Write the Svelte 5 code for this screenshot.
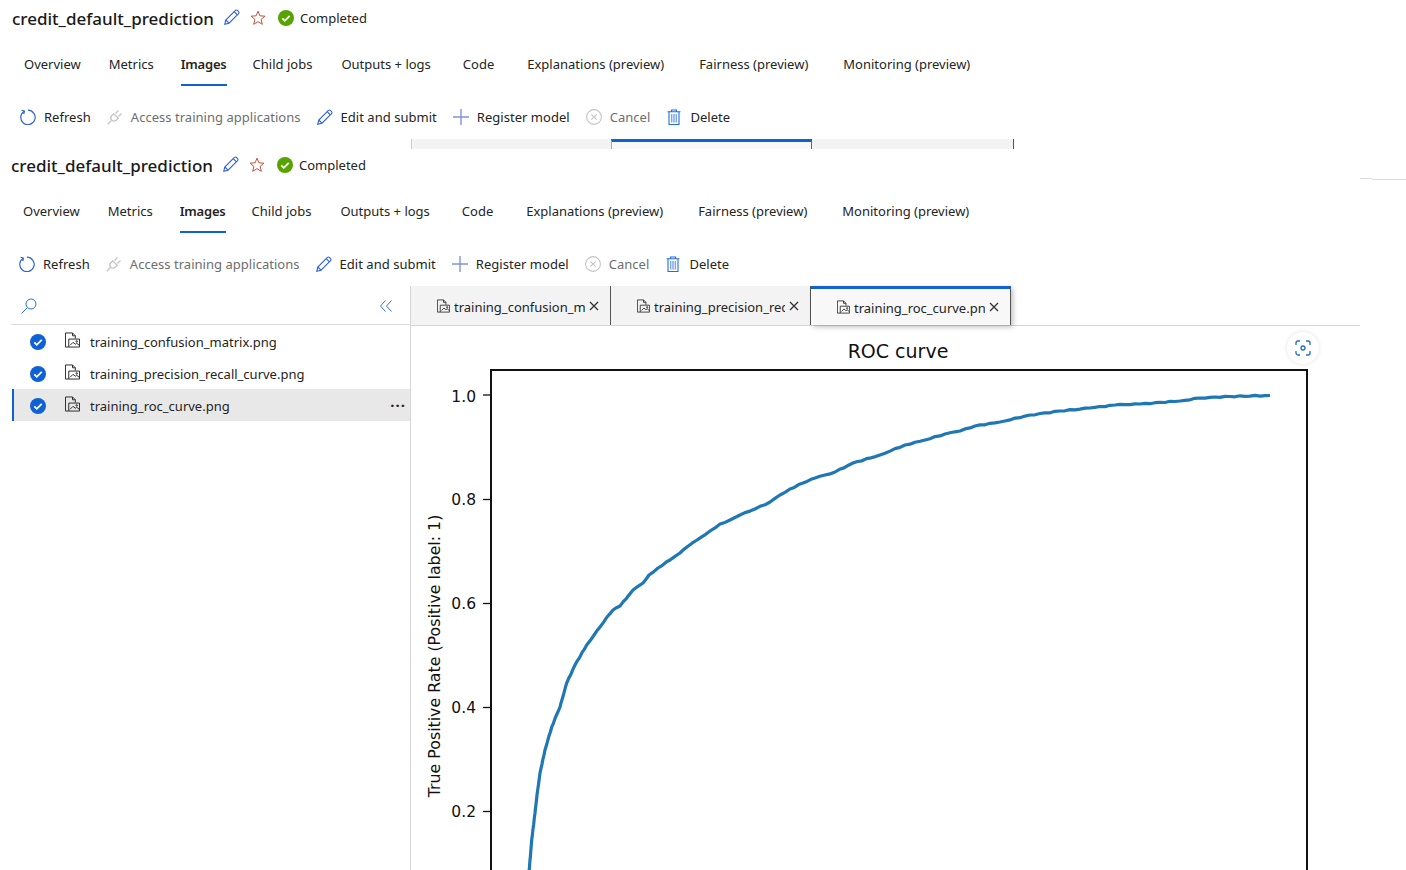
<script lang="ts">
  // Job detail page, captured twice on top of each other, with the image viewer below.
  const navTabs = [
    { label: 'Overview', gap: 28 },
    { label: 'Metrics', gap: 27 },
    { label: 'Images', gap: 26 },
    { label: 'Child jobs', gap: 29 },
    { label: 'Outputs + logs', gap: 32 },
    { label: 'Code', gap: 33 },
    { label: 'Explanations (preview)', gap: 35 },
    { label: 'Fairness (preview)', gap: 35 },
    { label: 'Monitoring (preview)', gap: 0 }
  ].map((t) => ({ ...t, active: t.label === 'Images' }))
  const files = [
    { name: 'training_confusion_matrix.png' },
    { name: 'training_precision_recall_curve.png' },
    { name: 'training_roc_curve.png', selected: true }
  ]
  const openTabs = [
    { name: 'training_confusion_matrix.png' },
    { name: 'training_precision_recall_curve.png' },
    { name: 'training_roc_curve.png', active: true }
  ]
  const ticks = [
    { label: '1.0', y: 395, ty: 401.5 },
    { label: '0.8', y: 499.5, ty: 505 },
    { label: '0.6', y: 603.5, ty: 609 },
    { label: '0.4', y: 707.5, ty: 713 },
    { label: '0.2', y: 811.5, ty: 817 }
  ]
  // page coordinates of the ROC line
  const curve = [
    [529, 872], [531.7, 840], [535, 813], [537, 795], [540, 773], [545, 750], [551.7, 727], [557, 714],
    [560, 707], [566.7, 683], [575, 665], [586.7, 645], [600, 627], [607, 617], [613, 610], [620, 606],
    [633, 590], [643, 583], [649, 575], [658, 568], [670, 560], [680, 553], [687, 547], [697, 540],
    [710, 531], [720, 524], [730, 520], [740, 515], [755, 509], [770, 502], [780, 495], [790, 489],
    [803, 483], [815, 478], [835, 472], [853, 463], [880, 455], [905, 445], [925, 440], [945, 434],
    [960, 431], [975, 426], [1000, 422], [1030, 415], [1060, 411], [1090, 408], [1115, 405], [1140, 404],
    [1180, 401], [1200, 398], [1230, 396.5], [1270, 395.5]
  ]
  // split each segment and wobble it a little, the real line is made of small steps
  const detailed: number[][] = []
  curve.forEach((p, i) => {
    const next = curve[i + 1]
    if (!next) return detailed.push(p)
    const n = Math.max(1, Math.round(Math.hypot(next[0] - p[0], next[1] - p[1]) / 5))
    for (let k = 0; k < n; k++) {
      const t = k / n
      const wob = k === 0 ? 0 : Math.sin(k * 2.3 + i) * 0.45
      detailed.push([p[0] + (next[0] - p[0]) * t, p[1] + (next[1] - p[1]) * t + wob])
    }
  })
  const curvePts = detailed.map((p) => p[0].toFixed(1) + ',' + p[1].toFixed(1)).join(' ')
</script>

{#snippet pencil()}
  <svg class="ico" viewBox="0 0 16 16" fill="none" stroke="#2f62d8" stroke-width="1.100">
    <path d="M.8 15.200l1-4.200L11.400 1.400a1.400 1.400 0 0 1 2 0l1.200 1.200a1.400 1.400 0 0 1 0 2L5 14.200z" />
    <path d="M10.200 2.600l3.200 3.200M1.800 11l3.200 3.200" />
  </svg>
{/snippet}

{#snippet fileIcon(cls)}
  <svg class={cls} viewBox="0 0 16 16" fill="none" stroke="#222" stroke-width="1">
    <path d="M.5 15.500V.5h7.500l3 3v3M8 .5v3h3" />
    <path d="M.5 15.500h15v-8.500H4v8.500" />
    <path d="M5.500 13.500l3-3 2.500 2 1.500-1 2.500 2" />
    <circle cx="12.500" cy="9.500" r=".8" />
  </svg>
{/snippet}

{#snippet header()}
  <div class="title-row">
    <h1>credit_default_prediction</h1>
    <span class="title-pencil">{@render pencil()}</span>
    <svg class="star" viewBox="0 0 16 16" fill="none" stroke="#c8503c" stroke-width="1">
      <path d="M8 1.200l1.900 4.600 5 .4-3.800 3.200 1.200 4.900L8 11.700l-4.300 2.600 1.200-4.900L1.100 6.200l5-.4z" />
    </svg>
    <svg class="status-ico" viewBox="0 0 16 16">
      <circle cx="8" cy="8" r="8" fill="#57a300" />
      <path d="M4.300 8.300l2.500 2.500 4.900-5" fill="none" stroke="#fff" stroke-width="1.800" />
    </svg>
    <span class="status">Completed</span>
  </div>

  <nav class="nav">
    {#each navTabs as t (t.label)}
      <span class="nav-tab" class:active={t.active} style="margin-right:{t.gap}px">{t.label}</span>
    {/each}
  </nav>

  <div class="toolbar">
    <span class="tool">
      <svg class="ico" viewBox="0 0 16 16" fill="none" stroke="#2f62d8" stroke-width="1.200">
        <path d="M4.300 2.200a7.200 7.200 0 1 0 3.700-1" />
        <path d="M1.600 1.200l2.900 1 -.8 3" />
      </svg>
      Refresh
    </span>
    <span class="tool off">
      <svg class="ico" viewBox="0 0 16 16" fill="none" stroke="#c4c4c4" stroke-width="1.300">
        <path d="M.8 15.200l3.400-3.400M4.800 6.800l2-2 4.400 4.400-2 2a3 3 0 0 1-4.400-4.400zM8.500 4.500L11.500 1.500M11.500 7.500l3-3" />
      </svg>
      Access training applications
    </span>
    <span class="tool">{@render pencil()} Edit and submit</span>
    <span class="tool">
      <svg class="ico" viewBox="0 0 16 16" fill="none" stroke="#7f92e4" stroke-width="1.400">
        <path d="M8 0v16M0 8h16" />
      </svg>
      Register model
    </span>
    <span class="tool off">
      <svg class="ico" viewBox="0 0 16 16" fill="none" stroke="#c4c4c4" stroke-width="1.100">
        <circle cx="8" cy="8" r="7.400" />
        <path d="M5.300 5.300l5.400 5.400M10.700 5.300l-5.400 5.400" />
      </svg>
      Cancel
    </span>
    <span class="tool">
      <svg class="ico" viewBox="0 0 16 16" fill="none" stroke="#1f6fe0" stroke-width="1.100">
        <path d="M1.500 2.800h13M5.500 2.800V1h5v1.800M3 2.800v12.700h10V2.800" />
        <path d="M5.500 5v8.500M7.200 5v8.500M8.800 5v8.500M10.500 5v8.500" stroke="#7fa8ea" />
      </svg>
      Delete
    </span>
  </div>
{/snippet}

<div class="page">
  <section class="head first">{@render header()}</section>

  <div class="strip">
    <span class="strip-tab"></span>
    <span class="strip-tab on"></span>
    <span class="strip-tab last"></span>
  </div>

  <section class="head">{@render header()}</section>

  <div class="viewer">
    <aside class="side">
      <div class="side-top">
        <svg class="search" viewBox="0 0 16 16" fill="none" stroke="#2f6fd8" stroke-width="1">
          <circle cx="10" cy="6" r="5" />
          <path d="M6.400 9.600L.6 15.400" />
        </svg>
        <svg class="collapse" viewBox="0 0 12 12" fill="none" stroke="#3f6fd6" stroke-width="1">
          <path d="M5.500.5L.5 6l5 5.500M11.500.5L6.500 6l5 5.500" />
        </svg>
      </div>
      {#each files as f (f.name)}
        <div class="file" class:selected={f.selected}>
          <svg class="check" viewBox="0 0 16 16">
            <circle cx="8" cy="8" r="8" fill="#0f62d6" />
            <path d="M4.300 8.300l2.500 2.500 4.900-5" fill="none" stroke="#fff" stroke-width="1.800" />
          </svg>
          {@render fileIcon('file-ico')}
          <span class="file-name">{f.name}</span>
          {#if f.selected}<span class="more">···</span>{/if}
        </div>
      {/each}
    </aside>

    <main class="main">
      <div class="tabs">
        {#each openTabs as t (t.name)}
          <div class="tab" class:active={t.active}>
            {@render fileIcon('tab-ico')}
            <span class="tab-name">{t.name}</span>
            <svg class="tab-x" viewBox="0 0 10 10" fill="none" stroke="#333" stroke-width="1.300">
              <path d="M1 1l8 8M9 1l-8 8" />
            </svg>
          </div>
        {/each}
      </div>

      <div class="plot">
        <!-- viewBox uses page coordinates so the figure reads straight off the screenshot -->
        <svg class="figure" viewBox="411 326 949 544">
          <text x="898" y="358" text-anchor="middle" class="plot-title">ROC curve</text>
          <rect x="491" y="370" width="816" height="520" fill="none" stroke="#111" stroke-width="2" />
          {#each ticks as t (t.label)}
            <line x1="483" x2="491" y1={t.y} y2={t.y} stroke="#111" stroke-width="1.300" />
            <text x="476" y={t.ty} text-anchor="end" class="tick">{t.label}</text>
          {/each}
          <text transform="translate(440 656) rotate(-90)" text-anchor="middle" class="ylabel">
            True Positive Rate (Positive label: 1)
          </text>
          <polyline points={curvePts} fill="none" stroke="#1f77b4" stroke-width="3.200" stroke-linejoin="round" />
        </svg>
        <button class="shot" aria-label="Capture">
          <svg viewBox="0 0 16 16" fill="none" stroke="#1f6fc8" stroke-width="1.300">
            <path d="M1 5V3a2 2 0 0 1 2-2h2M11 1h2a2 2 0 0 1 2 2v2M15 11v2a2 2 0 0 1-2 2h-2M5 15H3a2 2 0 0 1-2-2v-2" />
            <circle cx="8" cy="8" r="2" />
          </svg>
        </button>
      </div>
    </main>
  </div>

  <div class="edge"><i></i><b></b></div>
</div>

<style>
  :global(body) {
    margin: 0;
    background: #fff;
  }
  .page {
    position: relative;
    height: 870px;
    overflow: hidden;
    padding-left: 11px;
    font-family: 'Noto Sans', 'Open Sans', sans-serif;
    font-size: 13px;
    color: #242424;
  }
  .head {
    height: 139px;
  }
  .head.first {
    margin-left: 1px;
  }
  .title-row {
    display: flex;
    align-items: center;
    height: 38px;
  }
  h1 {
    margin: 0 0 2px;
    font-size: 17px;
    font-weight: 500;
    color: #1a1a1a;
    width: 202px;
    white-space: nowrap;
  }
  .title-pencil {
    display: flex;
    margin: 0 0 4px 10px;
  }
  .star {
    width: 16px;
    height: 16px;
    margin: 0 0 2px 10px;
  }
  .status-ico {
    width: 16px;
    height: 16px;
    margin: 0 0 2px 12px;
  }
  .status {
    margin: 0 0 2px 6px;
  }
  .nav {
    display: flex;
    height: 48px;
    padding-left: 12px;
  }
  .nav-tab {
    height: 48px;
    line-height: 52px;
    white-space: nowrap;
    box-sizing: border-box;
  }
  .nav-tab.active {
    font-weight: 600;
    letter-spacing: -0.2px;
    border-bottom: 2px solid #0f62d6;
  }
  .toolbar {
    display: flex;
    align-items: center;
    gap: 16px;
    height: 32px;
    margin: 15px 0 0 8px;
  }
  .tool {
    display: inline-flex;
    align-items: center;
    gap: 8px;
    white-space: nowrap;
    letter-spacing: 0.03px;
  }
  .tool.off {
    color: #6e6e6e;
  }
  .ico {
    width: 16px;
    height: 16px;
    flex: none;
  }
  .strip {
    display: flex;
    height: 10px;
    margin: 0 0 -2px 400px;
  }
  .strip-tab {
    width: 200px;
    box-sizing: border-box;
    background: #f3f3f3;
    border-left: 1px solid #d0d0d0;
  }
  .strip-tab.on {
    border-top: 3px solid #0f62d6;
    border-left: 1px solid #aaa;
    border-right: 1px solid #666;
    width: 201px;
    background: #f8f8f8;
  }
  .strip-tab.last {
    width: 202px;
    border-left: 0;
    border-right: 1px solid #555;
  }
  .viewer {
    display: flex;
    height: 585px;
  }
  .side {
    width: 399px;
    flex: none;
  }
  .side-top {
    display: flex;
    align-items: center;
    justify-content: space-between;
    height: 39px;
    padding: 1px 18px 0 10px;
    box-sizing: border-box;
    border-bottom: 1px solid #dcdcdc;
  }
  .search {
    width: 16px;
    height: 16px;
  }
  .collapse {
    width: 12px;
    height: 12px;
  }
  .file {
    display: flex;
    align-items: center;
    height: 32px;
    padding-left: 18px;
    margin-left: 1px;
  }
  .file.selected {
    background: #e8e8e8;
    box-shadow: inset 2px 0 0 #0f62d6;
  }
  .check {
    width: 16px;
    height: 16px;
    flex: none;
    margin: 2px 19px 0 0;
  }
  .file-ico {
    width: 15px;
    height: 16px;
    flex: none;
    margin: -2px 10px 0 0;
  }
  .file-name {
    padding-top: 2px;
  }
  .more {
    margin-left: auto;
    margin-right: 4px;
    font-weight: 700;
    font-size: 15px;
    letter-spacing: 1px;
    line-height: 16px;
  }
  .main {
    display: flex;
    flex-direction: column;
    width: 949px;
    flex: none;
    border-left: 1px solid #d6d6d6;
  }
  .tabs {
    display: flex;
    height: 40px;
    box-sizing: border-box;
    border-bottom: 1px solid #d6d6d6;
  }
  .tab {
    display: flex;
    align-items: center;
    width: 200px;
    height: 39px;
    box-sizing: border-box;
    padding: 3px 0 0 26px;
    background: #f3f3f3;
    border-right: 1px solid #555;
  }
  .tab.active {
    background: #f8f8f8;
    border-top: 3px solid #0f62d6;
    padding-top: 2px;
    box-shadow: 2px 2px 5px rgba(0, 0, 0, 0.25);
    position: relative;
  }
  .tab-ico {
    width: 13px;
    height: 14px;
    flex: none;
    margin: -2px 4px 0 0;
  }
  .tab-name {
    width: 131px;
    overflow: hidden;
    white-space: nowrap;
  }
  .tab-x {
    width: 10px;
    height: 10px;
    margin: -2px 0 0 4px;
    flex: none;
  }
  .plot {
    position: relative;
    flex: 1;
    overflow: hidden;
  }
  .figure {
    display: block;
    width: 949px;
    height: 544px;
  }
  .plot-title {
    font: 19px 'DejaVu Sans', sans-serif;
    fill: #111;
  }
  .tick {
    font: 15.5px 'DejaVu Sans', sans-serif;
    fill: #111;
  }
  .ylabel {
    font: 15.8px 'DejaVu Sans', sans-serif;
    fill: #111;
  }
  .shot {
    position: absolute;
    left: 876px;
    top: 6px;
    width: 32px;
    height: 32px;
    padding: 8px;
    border: 0;
    border-radius: 50%;
    background: #fff;
    box-shadow: 0 0 4px rgba(0, 0, 0, 0.12);
  }
  .shot svg {
    display: block;
  }
  .edge {
    position: absolute;
    left: 1360px;
    top: 178px;
    display: flex;
  }
  .edge i {
    width: 12px;
    height: 1px;
    background: #dcdcdc;
  }
  .edge b {
    width: 34px;
    height: 1px;
    margin-top: 1px;
    background: #dcdcdc;
  }
</style>
